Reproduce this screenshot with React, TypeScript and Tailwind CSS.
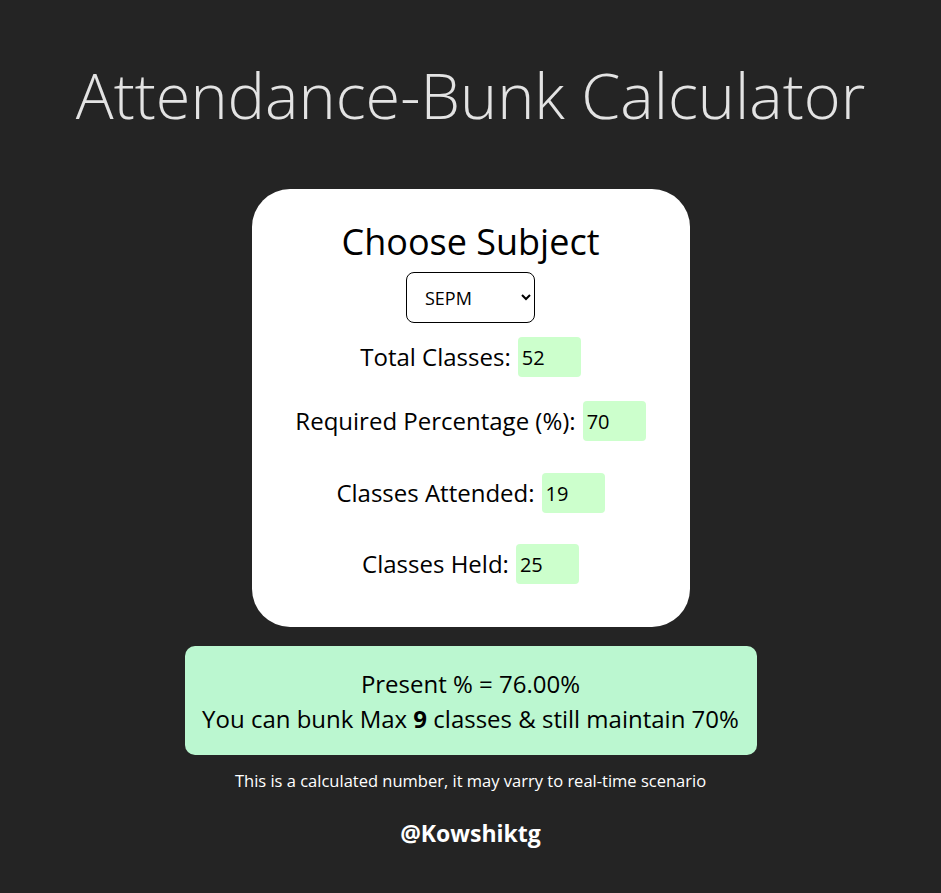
import React, { useState } from "react";

const subjects = ["SEPM", "DBMS", "CN", "OS"];

function Row({
  label,
  value,
  onChange,
  className,
}: {
  label: string;
  value: string;
  onChange: (v: string) => void;
  className?: string;
}) {
  return (
    <div className={`flex items-center justify-center ${className ?? ""}`}>
      <span className="text-[24px] leading-[32px] text-black">{label}</span>
      <input
        value={value}
        onChange={(e) => onChange(e.target.value)}
        className="ml-[7px] h-[40px] w-[63px] rounded-[4px] bg-[#ccffcc] px-[4px] text-[20px] text-black outline-none"
      />
    </div>
  );
}

export default function App() {
  const [subject, setSubject] = useState("SEPM");
  const [total, setTotal] = useState("52");
  const [required, setRequired] = useState("70");
  const [attended, setAttended] = useState("19");
  const [held, setHeld] = useState("25");

  const req = Number(required) / 100;
  const present = (Number(attended) / Number(held)) * 100;
  // classes you can still miss over the whole term
  const bunk = Math.max(
    0,
    Math.floor(Number(total) - Number(total) * req) - (Number(held) - Number(attended))
  );

  return (
    <div
      className="flex min-h-screen flex-col items-center bg-[#242424] pb-[40px]"
      style={{ fontFamily: '"Open Sans", "Noto Sans", sans-serif' }}
    >
      <h1 className="mt-[56px] text-[63px] font-light leading-[78px] text-[#e3e3e3]">
        Attendance-Bunk Calculator
      </h1>

      {/* Card */}
      <div className="mt-[55px] flex w-[438px] flex-col items-center rounded-[38px] bg-white pb-[43px] pt-[29px]">
        <h2 className="text-[36px] leading-[48px] text-black">Choose Subject</h2>
        <select
          value={subject}
          onChange={(e) => setSubject(e.target.value)}
          className="mt-[6px] h-[51px] w-[129px] rounded-[8px] border border-black bg-white pl-[14px] text-[18px] text-black"
        >
          {subjects.map((s) => (
            <option key={s}>{s}</option>
          ))}
        </select>
        <Row label="Total Classes:" value={total} onChange={setTotal} className="mt-[14px]" />
        <Row label="Required Percentage (%):" value={required} onChange={setRequired} className="mt-[24px]" />
        <Row label="Classes Attended:" value={attended} onChange={setAttended} className="mt-[32px]" />
        <Row label="Classes Held:" value={held} onChange={setHeld} className="mt-[31px]" />
      </div>

      {/* Result */}
      <div className="mt-[19px] flex h-[109px] w-[572px] flex-col items-center justify-center rounded-[10px] bg-[#bbf7d0] text-[24px] leading-[35px] text-black">
        <p>Present % = {present.toFixed(2)}%</p>
        <p>
          You can bunk Max <b>{bunk}</b> classes &amp; still maintain {required}%
        </p>
      </div>

      <p className="mt-[14px] text-[16.5px] text-white">
        This is a calculated number, it may varry to real-time scenario
      </p>
      <p className="mt-[22px] text-[23px] font-bold text-white">@Kowshiktg</p>
    </div>
  );
}
